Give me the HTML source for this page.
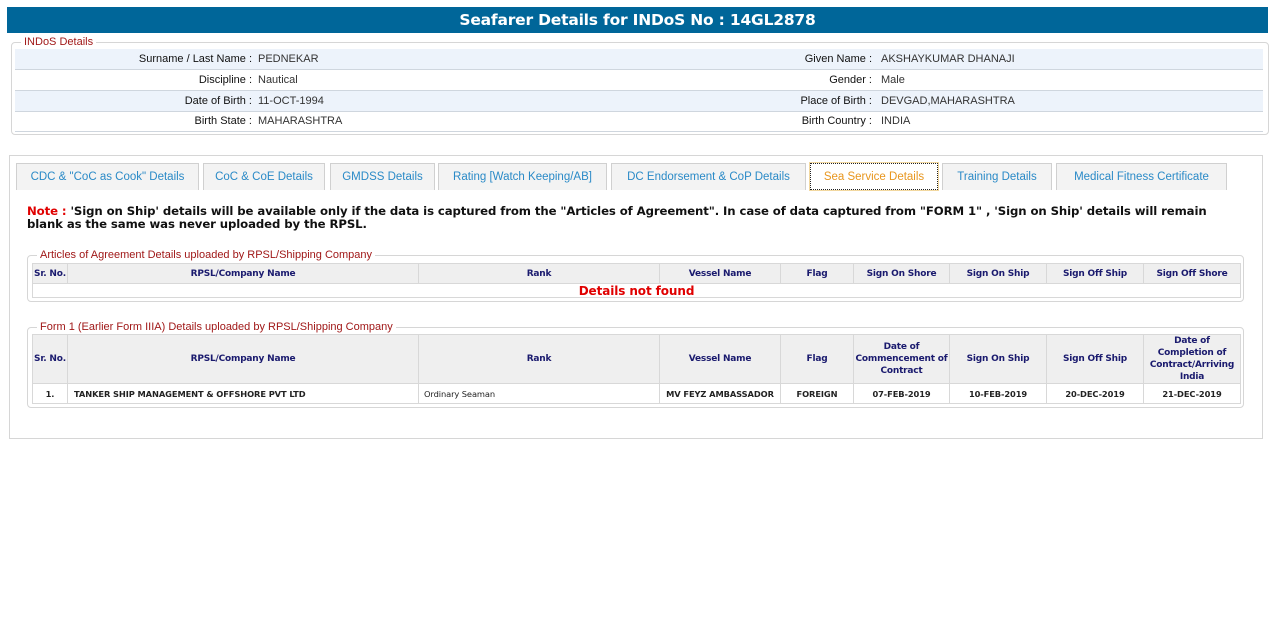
<!DOCTYPE html>
<html><head><meta charset="utf-8"><style>
*{box-sizing:border-box}
body{margin:0;width:1284px;height:631px;background:#fff;font-family:"Liberation Sans",Arial,sans-serif;position:relative;overflow:hidden}
.abs{position:absolute}
.hdr{left:7px;top:7px;width:1261px;height:26px;background:#006699;color:#fff;font:bold 15.5px "DejaVu Sans",sans-serif;text-align:center;line-height:26px;letter-spacing:-0.2px}
.fs{border:1px solid #d6d6d6;border-radius:4px}
.legend{background:#fff;color:#a01818;font-size:11px;padding:0 3px;line-height:12px}
.row{left:15px;width:1248px;height:21px;border-bottom:1px solid #cfd6de;font-size:11px;line-height:21px;color:#222}
.row.a{background:#edf3fb}
.lab{position:absolute;text-align:right;color:#111}
.val{position:absolute;color:#333}
.tab{top:163px;height:27px;border:1px solid #d0d0d0;border-bottom:none;background:#f3f3f3;color:#2a8ac7;font-size:11.5px;text-align:center;line-height:27px}
.tab.sel{background:#fff;color:#e8961e;border:1px dotted #222;outline:1px solid #f2d8a0}
.note{left:27px;top:205px;width:1215px;font:bold 11.7px "DejaVu Sans",sans-serif;color:#111;line-height:13px;letter-spacing:-0.1px}
table{border-collapse:collapse;table-layout:fixed;font-family:"DejaVu Sans",sans-serif}
th{background:#efefef;color:#1a1a6e;font-size:9px;font-weight:bold;border:1px solid #d8d8d8;padding:0 1px;line-height:12px;letter-spacing:-0.2px}
td{border:1px solid #d8d8d8;font-size:8.3px;font-weight:bold;color:#222;height:20px;text-align:center;padding:0 1px;white-space:nowrap;letter-spacing:-0.1px}
</style></head><body>
<div class="abs hdr">Seafarer Details for INDoS No : 14GL2878</div>

<div class="abs fs" style="left:11px;top:42px;width:1258px;height:93px"></div>
<div class="abs legend" style="left:21px;top:36px">INDoS Details</div>
<div class="abs row a" style="top:49px"><span class="lab" style="right:1011px">Surname / Last Name :</span><span class="val" style="left:243px">PEDNEKAR</span><span class="lab" style="right:391px">Given Name :</span><span class="val" style="left:866px">AKSHAYKUMAR DHANAJI</span></div>
<div class="abs row" style="top:70px"><span class="lab" style="right:1011px">Discipline :</span><span class="val" style="left:243px">Nautical</span><span class="lab" style="right:391px">Gender :</span><span class="val" style="left:866px">Male</span></div>
<div class="abs row a" style="top:91px"><span class="lab" style="right:1011px">Date of Birth :</span><span class="val" style="left:243px">11-OCT-1994</span><span class="lab" style="right:391px">Place of Birth :</span><span class="val" style="left:866px">DEVGAD,MAHARASHTRA</span></div>
<div class="abs row" style="top:111px"><span class="lab" style="right:1011px">Birth State :</span><span class="val" style="left:243px">MAHARASHTRA</span><span class="lab" style="right:391px">Birth Country :</span><span class="val" style="left:866px">INDIA</span></div>

<div class="abs" style="left:9px;top:155px;width:1254px;height:284px;border:1px solid #d6d6d6"></div>
<div class="abs tab" style="left:16px;width:183px">CDC &amp; "CoC as Cook" Details</div>
<div class="abs tab" style="left:203px;width:122px">CoC &amp; CoE Details</div>
<div class="abs tab" style="left:330px;width:105px">GMDSS Details</div>
<div class="abs tab" style="left:438px;width:169px">Rating [Watch Keeping/AB]</div>
<div class="abs tab" style="left:611px;width:195px">DC Endorsement &amp; CoP Details</div>
<div class="abs tab sel" style="left:810px;width:128px">Sea Service Details</div>
<div class="abs tab" style="left:942px;width:110px">Training Details</div>
<div class="abs tab" style="left:1056px;width:171px">Medical Fitness Certificate</div>

<div class="abs note"><span style="color:#e00000">Note : </span>'Sign on Ship' details will be available only if the data is captured from the "Articles of Agreement". In case of data captured from "FORM 1" , 'Sign on Ship' details will remain blank as the same was never uploaded by the RPSL.</div>

<div class="abs fs" style="left:27px;top:255px;width:1217px;height:47px"></div>
<div class="abs legend" style="left:37px;top:249px;color:#a01818">Articles of Agreement Details uploaded by RPSL/Shipping Company</div>
<table class="abs" style="left:32px;top:263px;width:1208px">
<colgroup><col style="width:35px"><col style="width:351px"><col style="width:241px"><col style="width:121px"><col style="width:73px"><col style="width:96px"><col style="width:97px"><col style="width:97px"><col style="width:97px"></colgroup>
<tr style="height:20px"><th style="white-space:nowrap">Sr. No.</th><th>RPSL/Company Name</th><th>Rank</th><th>Vessel Name</th><th>Flag</th><th>Sign On Shore</th><th>Sign On Ship</th><th>Sign Off Ship</th><th>Sign Off Shore</th></tr>
<tr><td colspan="9" style="height:14px;color:#e00000;font-size:12px;line-height:12px">Details not found</td></tr>
</table>

<div class="abs fs" style="left:27px;top:327px;width:1217px;height:81px"></div>
<div class="abs legend" style="left:37px;top:321px">Form 1 (Earlier Form IIIA) Details uploaded by RPSL/Shipping Company</div>
<table class="abs" style="left:32px;top:334px;width:1208px">
<colgroup><col style="width:35px"><col style="width:351px"><col style="width:241px"><col style="width:121px"><col style="width:73px"><col style="width:96px"><col style="width:97px"><col style="width:97px"><col style="width:97px"></colgroup>
<tr style="height:49px"><th style="white-space:nowrap">Sr. No.</th><th>RPSL/Company Name</th><th>Rank</th><th>Vessel Name</th><th>Flag</th><th>Date of Commencement of Contract</th><th>Sign On Ship</th><th>Sign Off Ship</th><th>Date of Completion of Contract/Arriving India</th></tr>
<tr><td>1.</td><td style="text-align:left;padding-left:6px">TANKER SHIP MANAGEMENT &amp; OFFSHORE PVT LTD</td><td style="text-align:left;padding-left:5px;font-weight:normal">Ordinary Seaman</td><td>MV FEYZ AMBASSADOR</td><td>FOREIGN</td><td>07-FEB-2019</td><td>10-FEB-2019</td><td>20-DEC-2019</td><td>21-DEC-2019</td></tr>
</table>
</body></html>
